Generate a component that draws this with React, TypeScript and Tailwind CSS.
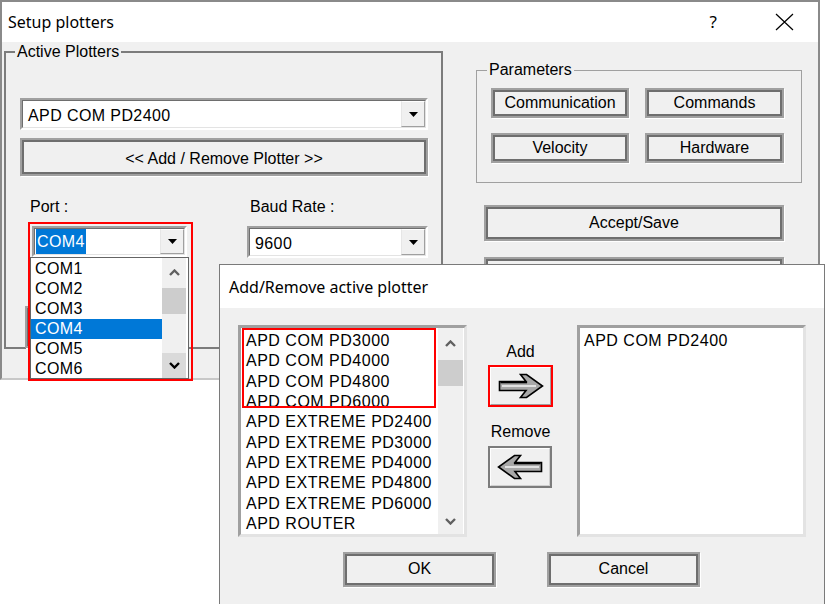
import React from 'react';

type Kids = { className?: string; children?: React.ReactNode };

// raised classic push button: light outer band, dark inner band
function Btn({ className = '', children }: Kids) {
  return (
    <div className={`border-2 border-[#a0a0a0] shadow-[1px_1px_0_#ffffff] ${className}`}>
      <div className="flex h-full w-full items-center justify-center border-2 border-[#6e6e6e] bg-[#f0f0f0] leading-none">
        {children}
      </div>
    </div>
  );
}

function DropArrow() {
  return (
    <svg width="9" height="5" viewBox="0 0 9 5">
      <path d="M0 0H9L4.5 5Z" fill="#000" />
    </svg>
  );
}

function Combo({ className = '', children }: Kids) {
  return (
    <div className={`flex border-2 border-t-[#a0a0a0] border-l-[#a0a0a0] border-b-white border-r-white ${className}`}>
      <div className="flex flex-1 items-center border border-t-[#6e6e6e] border-l-[#6e6e6e] border-b-[#e3e3e3] border-r-[#e3e3e3] bg-white">
        <div className="flex h-full flex-1 items-center tracking-[0.4px]">{children}</div>
        <div className="flex h-full w-[24px] items-center justify-center border border-t-white border-l-[#e6e6e6] border-b-[#a0a0a0] border-r-[#a0a0a0] bg-[#f0f0f0]">
          <DropArrow />
        </div>
      </div>
    </div>
  );
}

function Chevron({ up, color = '#606060' }: { up?: boolean; color?: string }) {
  return (
    <svg width="11" height="7" viewBox="0 0 11 7">
      <path d={up ? 'M1 6L5.5 1.5L10 6' : 'M1 1L5.5 5.5L10 1'} stroke={color} strokeWidth="2.4" fill="none" />
    </svg>
  );
}

function ArrowIcon({ left }: { left?: boolean }) {
  return (
    <svg width="46" height="26" viewBox="0 0 46 26" className={left ? '-scale-x-100' : ''}>
      <path
        d="M1.5 8.5H28L22.5 1.5H28.5L44.5 13L28.5 24.5H22.5L28 17.5H1.5Z"
        fill="#a8a8a8"
        stroke="#000"
        strokeWidth="1.6"
        strokeLinejoin="miter"
      />
      <path d="M2.5 9.5H29" stroke="#000" strokeWidth="1.6" />
      <path d="M4 13H38" stroke="#f4f4f4" strokeWidth="1.6" />
    </svg>
  );
}

const plotters = [
  'APD COM PD3000',
  'APD COM PD4000',
  'APD COM PD4800',
  'APD COM PD6000',
  'APD EXTREME PD2400',
  'APD EXTREME PD3000',
  'APD EXTREME PD4000',
  'APD EXTREME PD4800',
  'APD EXTREME PD6000',
  'APD ROUTER',
];

const ports = ['COM1', 'COM2', 'COM3', 'COM4', 'COM5', 'COM6'];

export default function App() {
  return (
    <div className="relative h-[604px] w-[826px] overflow-hidden bg-white font-['Liberation_Sans',Arial,sans-serif] text-[16px] text-black">
      {/* Setup plotters window */}
      <div className="absolute left-0 top-0 flex h-[380px] w-[820px] flex-col border-2 border-[#8a8a8a] border-b-[#c8c8c8]">
        <div className="flex h-[40px] items-center justify-between bg-white pl-[6px] pr-[24px] font-['Noto_Sans',sans-serif] text-[16px]">
          <span>Setup plotters</span>
          <div className="flex items-center gap-[58px]">
            <span className="text-[17px]">?</span>
            <svg width="19" height="18" viewBox="0 0 19 18">
              <path d="M1 1L18 17M18 1L1 17" stroke="#000" strokeWidth="1.2" />
            </svg>
          </div>
        </div>

        <div className="flex flex-1 bg-[#f0f0f0] pl-[2px]">
          <fieldset className="h-[307px] w-[439px] border-2 border-[#7c7c7c]">
            <legend className="ml-[9px] px-[2px] leading-[20px]">Active Plotters</legend>
            <div className="pl-[14px] pr-[13px] pt-[36px]">
              <Combo className="h-[32px]">
                <span className="pl-[5px] pt-[3px]">APD COM PD2400</span>
              </Combo>
              <Btn className="mt-[8px] h-[38px]">
                <span className="pt-[3px]">&lt;&lt; Add / Remove Plotter &gt;&gt;</span>
              </Btn>

              <div className="mt-[21px] flex">
                <div className="ml-[12px] w-[155px]">
                  <div className="-ml-[2px] mb-[9px] leading-[20px]">Port :</div>
                  <div className="relative">
                    <Combo className="h-[31px]">
                      <span className="ml-[1px] flex h-[25px] items-center bg-[#0078d7] px-[1px] text-white">COM4</span>
                    </Combo>
                    <div className="absolute left-[-2px] top-[31px] z-10 flex h-[122px] w-[159px] border border-[#646464] bg-white">
                      <div className="flex-1 pt-[1px] tracking-[0.4px]">
                        {ports.map(p => (
                          <div
                            key={p}
                            className={`flex h-[20px] items-center pl-[4px] ${p === 'COM4' ? 'bg-[#0078d7] text-white' : ''}`}
                          >
                            {p}
                          </div>
                        ))}
                      </div>
                      <div className="mr-[2px] flex w-[24px] flex-col bg-[#f0f0f0]">
                        <div className="flex h-[28px] items-center justify-center">
                          <Chevron up />
                        </div>
                        <div className="mt-[2px] h-[26px] bg-[#cdcdcd]" />
                        <div className="flex-1" />
                        <div className="flex h-[25px] items-center justify-center bg-[#dadada]">
                          <Chevron color="#000" />
                        </div>
                      </div>
                    </div>
                    <div className="pointer-events-none absolute left-[-4px] top-[-4px] z-20 h-[159px] w-[165px] border-2 border-[#ff0000]" />
                  </div>
                </div>
                <div className="ml-[60px] w-[181px]">
                  <div className="mb-[9px] ml-[3px] leading-[20px]">Baud Rate :</div>
                  <Combo className="h-[32px]">
                    <span className="pl-[5px] pt-[3px]">9600</span>
                  </Combo>
                </div>
              </div>

              <Btn className="ml-[5px] mt-[48px] h-[42px] w-[160px]">Test</Btn>
            </div>
          </fieldset>

          <div className="ml-[33px] w-[326px]">
            <fieldset className="mt-[18px] h-[123px] border border-[#a0a0a0]">
              <legend className="ml-[10px] px-[2px] leading-[20px]">Parameters</legend>
              <div className="grid grid-cols-[138px_139px] gap-x-[16px] gap-y-[15px] pl-[14px] pt-[8px]">
                <Btn className="h-[30px]">Communication</Btn>
                <Btn className="h-[30px]">Commands</Btn>
                <Btn className="h-[30px]">Velocity</Btn>
                <Btn className="h-[30px]">Hardware</Btn>
              </div>
            </fieldset>
            <Btn className="ml-[8px] mt-[22px] h-[36px] w-[300px]">Accept/Save</Btn>
            <Btn className="ml-[8px] mt-[16px] h-[36px] w-[300px]">Cancel</Btn>
          </div>
        </div>
      </div>

      {/* Add/Remove active plotter dialog */}
      <div className="absolute left-[219px] top-[264px] flex h-[340px] w-[606px] flex-col border border-b-0 border-[#7a7a7a]">
        <div className="flex h-[43px] items-center bg-white pl-[9px] font-['Noto_Sans',sans-serif] text-[16px]">
          Add/Remove active plotter
        </div>
        <div className="flex-1 bg-[#f0f0f0] pl-[18px] pt-[17px]">
          <div className="flex">
            <div className="relative flex h-[212px] w-[229px] border-[3px] border-t-[#a0a0a0] border-l-[#a0a0a0] border-b-[#e3e3e3] border-r-[#e3e3e3] bg-white">
              <div className="flex-1 pl-[5px] pt-[3px] tracking-[0.5px]">
                {plotters.map(p => (
                  <div key={p} className="flex h-[20.3px] items-center whitespace-nowrap">
                    {p}
                  </div>
                ))}
              </div>
              <div className="mr-[1px] flex w-[25px] flex-col bg-[#f0f0f0]">
                <div className="flex h-[30px] items-center justify-center">
                  <Chevron up />
                </div>
                <div className="mt-[2px] h-[26px] bg-[#cdcdcd]" />
                <div className="flex-1" />
                <div className="flex h-[26px] items-center justify-center">
                  <Chevron />
                </div>
              </div>
              <div className="pointer-events-none absolute left-[1px] top-0 h-[80px] w-[194px] border-2 border-[#ff0000]" />
            </div>

            <div className="flex w-[110px] flex-col pl-[21px]">
              <div className="mt-[17px] w-[65px] text-center leading-[20px]">Add</div>
              <div className="mt-[3px] flex h-[42px] w-[65px] items-center justify-center border-2 border-[#ff0000] bg-[#f0f0f0]">
                <div className="flex h-full w-full items-center justify-center border border-t-white border-l-white border-b-[#a0a0a0] border-r-[#a0a0a0]">
                  <ArrowIcon />
                </div>
              </div>
              <div className="mt-[15px] w-[65px] text-center leading-[20px]">Remove</div>
              <div className="mt-[4px] flex h-[42px] w-[64px] items-center justify-center border-2 border-[#7c7c7c] bg-[#f0f0f0]">
                <div className="flex h-full w-full items-center justify-center border border-t-white border-l-white border-b-[#d0d0d0] border-r-[#d0d0d0]">
                  <ArrowIcon left />
                </div>
              </div>
            </div>

            <div className="h-[212px] w-[229px] border-[3px] border-t-[#a0a0a0] border-l-[#a0a0a0] border-b-[#e3e3e3] border-r-[#e3e3e3] bg-white pl-[4px] pt-[3px] tracking-[0.5px]">
              <div className="flex h-[20px] items-center">APD COM PD2400</div>
            </div>
          </div>

          <div className="ml-[105px] mt-[15px] flex gap-[51px]">
            <Btn className="h-[35px] w-[153px]">
              <span className="-mt-[2px]">OK</span>
            </Btn>
            <Btn className="h-[35px] w-[153px]">
              <span className="-mt-[2px]">Cancel</span>
            </Btn>
          </div>
        </div>
      </div>
    </div>
  );
}
